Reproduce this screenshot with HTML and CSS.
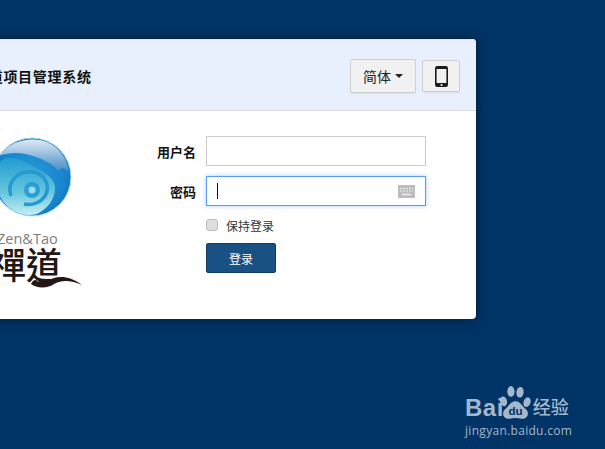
FILE: index.html
```html
<!DOCTYPE html>
<html>
  <head>
    <meta charset="utf-8" />
    <title>禅道项目管理系统</title>
    <link rel="stylesheet" href="styles.css">
  </head>
  <body>
    <div class="panel">
      <div class="panel-head">
        <h4 class="title">禅道项目管理系统</h4>
        <div class="actions">
          <button class="btn btn-lang">简体 <span class="caret"></span></button>
          <button class="btn btn-mobile">
            <svg width="13" height="21" viewBox="0 0 13 21">
              <rect x="0" y="0" width="13" height="21" rx="2.2" fill="#1c1c1c"/>
              <rect x="1.6" y="3" width="9.8" height="14" fill="#f1f1f1"/>
              <circle cx="6.5" cy="19" r="1.1" fill="#f1f1f1"/>
            </svg>
          </button>
        </div>
      </div>
      <div class="panel-body">
        <div class="logo">
          <svg width="140" height="160" viewBox="0 0 140 160">
            <defs>
              <radialGradient id="ball" cx="50%" cy="50%" r="55%">
                <stop offset="0" stop-color="#2a9ad8"/>
                <stop offset="0.8" stop-color="#1683cc"/>
                <stop offset="1" stop-color="#0f6fb8"/>
              </radialGradient>
              <linearGradient id="shine" x1="0" y1="0" x2="0" y2="1">
                <stop offset="0" stop-color="#dfe9f3"/>
                <stop offset="1" stop-color="#3d86c4"/>
              </linearGradient>
              <linearGradient id="swirl" x1="0" y1="0" x2="0" y2="1">
                <stop offset="0" stop-color="#1f9ccf"/>
                <stop offset="0.6" stop-color="#66c6de"/>
                <stop offset="1" stop-color="#c4eef4"/>
              </linearGradient>
            </defs>
            <circle cx="71" cy="41" r="39" fill="url(#ball)" stroke="#a9d8e8" stroke-width="1"/>
            <path d="M38 20 C48 5 70 0 86 6 C98 11 107 23 108 37 C104 31 100 31 97 35 C92 28 84 24 72 20 C60 16 48 16 38 20Z" fill="url(#shine)"/>
            <path d="M32.500 40 C33 32 38 24 46 22 C58 20 68 28 78 34 C86 38 94 44 94 52 C94 62 88 72 76 78 C62 82 46 74 40 62 C35 55 33 48 32.500 40Z" fill="url(#swirl)"/>
            <path d="M50 60 C45 45 58 34 72 36 C84 38 90 50 84 60 C80 66 72 70 63 68" fill="none" stroke="#2499d2" stroke-width="3.500"/>
            <circle cx="71" cy="54" r="8" fill="#2a9fd5"/>
            <circle cx="71" cy="54" r="3.500" fill="#9bdde9"/>
            <text class="logo-en" x="36" y="108">Zen&amp;Tao</text>
            <text class="logo-cn" x="29" y="143">禪道</text>
            <path d="M70 148 C72 143 76 143 77 146 C79 142 84 142 85 146 C94 140 106 138 121 149 C110 144 100 144 93 148 C88 152 76 153 70 148Z" fill="#231815"/>
          </svg>
        </div>
        <form class="login-form">
          <div class="row">
            <label class="row-label">用户名</label>
            <input class="field" type="text" />
          </div>
          <div class="row">
            <label class="row-label">密码</label>
            <div class="field field-focus">
              <span class="cursor"></span>
              <svg width="17" height="13" viewBox="0 0 17 13">
                <rect width="17" height="13" fill="#bcbcbc"/>
                <path d="M2 3.500h13M2 6h13" stroke="#eee" stroke-width="1" stroke-dasharray="2 1"/>
                <path d="M4 9.500h9" stroke="#eee" stroke-width="1.400"/>
              </svg>
            </div>
          </div>
          <div class="keep">
            <span class="check"></span>
            <span>保持登录</span>
          </div>
          <button class="btn-submit" type="button">登录</button>
        </form>
      </div>
    </div>

    <div class="watermark">
      <div class="wm-top">
        <span class="wm-bai">Bai</span>
        <svg class="wm-paw" width="33" height="36" viewBox="0 0 40 42">
          <ellipse cx="5.500" cy="19" rx="4.200" ry="6" fill="#a5b8cb" transform="rotate(-15 5.500 19)"/>
          <ellipse cx="14.500" cy="7" rx="4.400" ry="6.500" fill="#a5b8cb"/>
          <ellipse cx="25.500" cy="8" rx="4.400" ry="6.500" fill="#a5b8cb" transform="rotate(8 25.500 8)"/>
          <ellipse cx="34" cy="20" rx="4.200" ry="6" fill="#a5b8cb" transform="rotate(20 34 20)"/>
          <path d="M20 19 C26 19 28 25 33 29 C38 35 33 41 27 40 C22 39 18 39 13 40 C7 41 2 35 7 29 C12 25 14 19 20 19Z" fill="#a5b8cb"/>
          <text class="wm-du" x="20" y="36">du</text>
        </svg>
        <span class="wm-cn">经验</span>
      </div>
      <div class="wm-url">jingyan.baidu.com</div>
    </div>
  </body>
</html>
```

FILE: styles.css
```css
html, body {
  margin: 0;
  height: 100%;
  overflow: hidden;
}
body {
  position: relative;
  padding-top: 39px;
  box-sizing: border-box;
  background: #003366;
  font-family: "Liberation Sans", "Noto Sans CJK SC", sans-serif;
  font-size: 13px;
  color: #141414;
}

.panel {
  width: 600px;
  height: 280px;
  margin-left: -124px;
  background: #fff;
  border-radius: 4px;
  box-shadow: 0 0 12px rgba(0, 0, 0, 0.45);
  overflow: hidden;
}

.panel-head {
  display: flex;
  align-items: center;
  justify-content: space-between;
  box-sizing: border-box;
  height: 72px;
  padding: 2px 16px 0 98px;
  background: #e9f0fd;
  border-top: 1px solid #dfe4ec;
  border-bottom: 1px solid #dcdcdc;
}
.title {
  margin: 0;
  font-size: 14px;
  letter-spacing: 0.7px;
  font-weight: bold;
  color: #111;
}
.actions {
  display: flex;
  align-items: center;
  gap: 6px;
}
.btn {
  display: flex;
  align-items: center;
  justify-content: center;
  padding: 0;
  background: #f1f1f1;
  border: 1px solid #cfcfcf;
  border-radius: 2px;
  box-shadow: 0 1px 1px rgba(0, 0, 0, 0.08);
  color: #222;
  font-family: inherit;
}
.btn-lang {
  width: 66px;
  height: 34px;
  gap: 4px;
  font-size: 14px;
}
.btn-mobile {
  width: 38px;
  height: 32px;
}
.caret {
  width: 0;
  height: 0;
  border-top: 4px solid #222;
  border-left: 4px solid transparent;
  border-right: 4px solid transparent;
}

.panel-body {
  display: flex;
}
.logo {
  margin: 25px 0 0 85px;
  flex-shrink: 0;
}
.logo svg {
  display: block;
}
.logo-en {
  font-family: "Open Sans", sans-serif;
  font-size: 14.5px;
  fill: #7d7d7d;
}
.logo-cn {
  font-family: "Noto Sans CJK TC", "Noto Sans CJK SC", sans-serif;
  font-size: 36px;
  font-weight: 500;
  fill: #231815;
}

.login-form {
  margin-left: 10px;
  padding-top: 25px;
}
.row {
  display: flex;
  align-items: center;
  gap: 10px;
  margin-bottom: 10px;
}
.row-label {
  width: 85px;
  text-align: right;
  font-size: 13px;
  font-weight: bold;
}
.field {
  display: flex;
  align-items: center;
  justify-content: space-between;
  box-sizing: border-box;
  width: 220px;
  height: 30px;
  margin: 0;
  padding: 0 10px;
  background: #fff;
  border: 1px solid #cccccc;
  outline: none;
}
.field-focus {
  border-color: #5b9bf8;
  box-shadow: 0 0 4px rgba(91, 155, 248, 0.55);
}
.cursor {
  width: 1px;
  height: 16px;
  background: #111;
}

.keep {
  display: flex;
  align-items: center;
  gap: 8px;
  margin: 12px 0 11px 95px;
  height: 14px;
  font-size: 12px;
  color: #333;
}
.check {
  box-sizing: border-box;
  width: 12px;
  height: 12px;
  background: #dedede;
  border: 1px solid #bdbdbd;
  border-radius: 3px;
}
.btn-submit {
  display: block;
  box-sizing: border-box;
  width: 70px;
  height: 30px;
  margin-left: 95px;
  padding: 0;
  background: #1a5185;
  border: 1px solid #123c63;
  border-radius: 2px;
  color: #fff;
  font-family: inherit;
  font-size: 12px;
}

.watermark {
  position: absolute;
  left: 465px;
  top: 385px;
  color: #a5b8cb;
}
.wm-top {
  display: flex;
  align-items: flex-end;
  height: 36px;
}
.wm-bai {
  font-size: 24px;
  font-weight: bold;
  line-height: 27px;
  letter-spacing: 0.5px;
}
.wm-paw {
  margin-left: -5px;
  flex-shrink: 0;
}
.wm-du {
  font-family: "Liberation Sans", sans-serif;
  font-size: 14px;
  font-weight: bold;
  text-anchor: middle;
  fill: #003366;
}
.wm-cn {
  font-family: "Noto Sans CJK SC", sans-serif;
  font-size: 18px;
  font-weight: 500;
  line-height: 30px;
  margin-left: 1px;
}
.wm-url {
  font-family: "Open Sans", sans-serif;
  font-size: 12px;
  margin-top: 1px;
  letter-spacing: 0.3px;
  white-space: nowrap;
}
```
